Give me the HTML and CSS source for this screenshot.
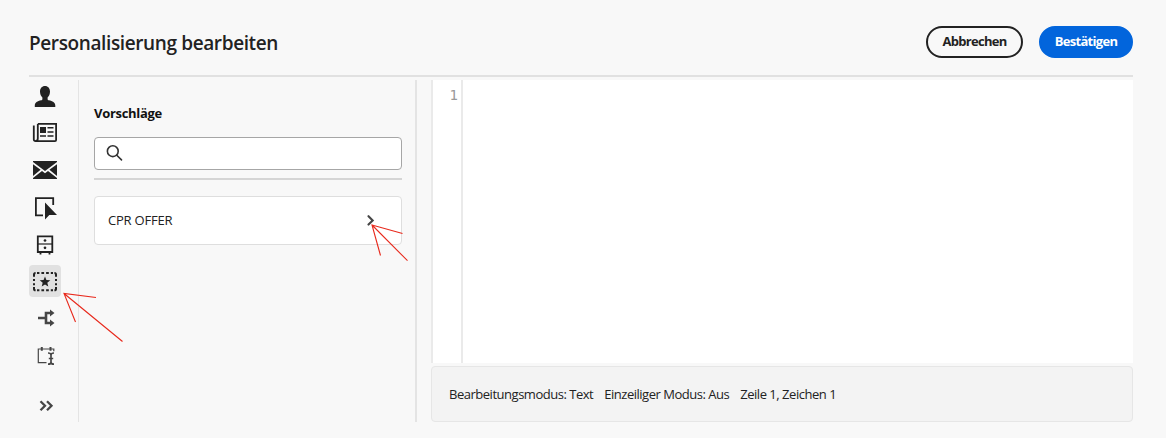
FILE: index.html
```html
<!DOCTYPE html>
<html lang="de">
<head>
<meta charset="utf-8">
<title>Personalisierung bearbeiten</title>
<link rel="stylesheet" href="styles.css">
</head>
<body>
<div class="dialog">
  <header class="header">
    <h1 class="title"><span>Personalisierung bearbeiten</span></h1>
    <div class="actions">
      <button class="btn btn-cancel"><span>Abbrechen</span></button>
      <button class="btn btn-confirm"><span>Bestätigen</span></button>
    </div>
  </header>
  <main class="body">
    <nav class="rail">
      <a class="rail-item"><svg viewBox="0 0 32 32"><path d="M16 6c3.100 0 5 2.300 5 5.600 0 2.500-.9 4.600-2.400 6v1.300c0 .8.5 1.200 1.300 1.400 3.600.9 6.400 2.200 6.400 5.200V27H5.800v-1.500c0-3 2.700-4.300 6.300-5.200.8-.2 1.300-.6 1.300-1.400v-1.300c-1.500-1.400-2.400-3.500-2.400-6C11 8.300 12.900 6 16 6z"/></svg></a>
      <a class="rail-item"><svg viewBox="0 0 32 32"><path class="line" d="M8.800 6.900h18.300v16.100q0 1.100-1.100 1.100H6.500q-1.700 0-1.700-1.600V8.600M8.800 6.900v14.600q0 2.500-2.300 2.500" stroke-width="1.800"/><path d="M11 10h6v6h-6zM18.500 10h6v1.600h-6zM18.500 14.200h6v1.600h-6zM11 18.200h6v1.600h-6zM18.500 18.200h6v1.600h-6z"/></svg></a>
      <a class="rail-item"><svg viewBox="0 0 32 32"><path d="M4 7h24v1.100L16 17.100 4 8.100zM4 10.200l7.600 5.600L4 21.900zM28 10.200l-7.600 5.600 7.600 6.100zM13 17l3 2.200L19 17l9 7.100V25H4v-.9z"/></svg></a>
      <a class="rail-item"><svg viewBox="0 0 32 32"><path class="line" d="M14 24.300H6.900V7.100h17.300v7" stroke-width="1.800"/><path d="M16 11.500v17l4.300-4.400H28z"/></svg></a>
      <a class="rail-item"><svg viewBox="0 0 32 32"><path class="line" d="M8.800 8.300h14.500v15.700H8.800zM11.500 24v2.500M20.500 24v2.500" stroke-width="1.800"/><path class="line" d="M9 16h14" stroke-width="1.200"/><circle cx="16" cy="12.500" r="1.350"/><circle cx="16" cy="19.800" r="1.350"/></svg></a>
      <a class="rail-item selected"><svg viewBox="0 0 32 32"><path class="line" d="M8 7.900h2.400m2 0h2.700m2 0h2.700m2 0H24M8 25.300h2.400m2 0h2.700m2 0h2.700m2 0H24M5 14v2m0 2.300v2m22-6.300v2m0 2.300v2M5 11.800V9.500q0-1.600 1.600-1.600M25.400 7.900Q27 7.900 27 9.500v2.300M5 22.100v1.600q0 1.600 1.600 1.600M25.400 25.300q1.600 0 1.600-1.600v-1.600" stroke-width="2"/><path d="m16 11.500 1.400 3.600 3.900.2-3 2.400 1 3.800-3.300-2.100-3.300 2.100 1-3.800-3-2.400 3.900-.2z"/></svg></a>
      <a class="rail-item muted"><svg viewBox="0 0 32 32"><path class="line" d="M9 16h7M22.500 11H17v10h5.500" stroke-width="2.600"/><path d="M21 7.500 25.500 11 21 14.500zM21 17.500l4.500 3.500-4.500 3.500z"/></svg></a>
      <a class="rail-item muted"><svg viewBox="0 0 32 32"><path class="line" d="M17.500 23.700H9.300V10h15.500v2.200" stroke-width="1.200"/><path class="line" d="M12.800 8v3.700M21.500 8v3.700" stroke-width="2"/><path class="line" d="M19 14q3 0 3 2v7.200q0 2-3 2M25 14q-3 0-3 2v7.200q0 2 3 2M19.800 19.500h4.400" stroke-width="1.700"/></svg></a>
      <a class="rail-item expand muted"><svg viewBox="0 0 32 32"><path class="line" d="m11.500 11.300 4.500 4.500-4.500 4.500M18 11.300l4.500 4.500-4.500 4.500" stroke-width="2.300"/></svg></a>
    </nav>
    <section class="panel">
      <h2 class="panel-title"><span>Vorschläge</span></h2>
      <div class="search"><svg viewBox="0 0 18 18"><circle cx="6.800" cy="7.200" r="5.400"/><path d="m10.800 11.200 4.700 4.700"/></svg></div>
      <div class="divider"></div>
      <div class="offer"><span>CPR OFFER</span><svg viewBox="0 0 10 12"><path d="m2.500 2.200 4.200 4.200-4.200 4.200"/></svg></div>
    </section>
    <section class="workspace">
      <div class="editor"><div class="gutter">1</div><div class="code"></div></div>
      <footer class="status"><span class="mode">Bearbeitungsmodus: Text</span><span class="single">Einzeiliger Modus: Aus</span><span class="cursor">Zeile 1, Zeichen 1</span></footer>
    </section>
  </main>
  <svg class="arrows" viewBox="0 0 1166 438"><path d="M96 297.500 64 293.500 75.500 322M64 293.500l58.500 48"/><path d="M402.500 233.500 372 225l8.500 30.500M372 225l35.500 35.700"/></svg>
</div>
</body>
</html>
```
FILE: styles.css
```css
* { box-sizing: border-box; }
body { margin: 0; background: #f8f8f8; color: #222; font: 13px "Open Sans", "Noto Sans", sans-serif; }
.dialog { position: relative; height: 438px; padding: 0 33px 0 29px; overflow: hidden; }
.header { height: 77px; padding-top: 8px; display: flex; align-items: center; justify-content: space-between; border-bottom: 2px solid #e1e1e1; }
.title { margin: 0; font-size: 19px; line-height: 28px; font-weight: 600; letter-spacing: -.38px; padding-top: 2px; }
.actions { display: flex; gap: 16px; }
.btn { height: 32px; padding: 0 0 1px; border-radius: 16px; border: 2px solid #222; background: transparent; color: #222; font: bold 13px "Open Sans", sans-serif; letter-spacing: -.7px; white-space: nowrap; }
.btn-cancel { width: 97px; }
.btn-confirm { width: 94px; border-color: #0265dc; background: #0265dc; color: #fff; }
.body { display: flex; height: 345px; padding-top: 3px; }
.rail { width: 50px; border-right: 1px solid #e4e4e4; display: flex; flex-direction: column; gap: 5px; }
.rail-item { width: 32px; height: 32px; border-radius: 4px; color: #222; }
.rail-item svg { display: block; width: 32px; height: 32px; fill: currentColor; }
.rail-item .line { fill: none; stroke: currentColor; }
.selected { background: #e1e1e1; }
.muted { color: #464646; }
.expand { margin-top: 14px; }
.panel { width: 338px; padding: 25px 13px 0 15px; border-right: 2px solid #e4e4e4; }
.panel-title { margin: 0; height: 32px; line-height: 17px; font-size: 13px; font-weight: 700; color: #111; letter-spacing: -.3px; }
.search { height: 33px; border: 1px solid #a6a6a6; border-radius: 4px; background: #fff; padding: 6px 11px; }
.search svg { display: block; width: 18px; height: 18px; fill: none; stroke: #333; stroke-width: 1.6; stroke-linecap: round; }
.divider { height: 2px; background: #d5d5d5; margin: 8px 0 16px; }
.offer { height: 49px; border: 1px solid #dedede; border-radius: 4px; background: #fff; display: flex; align-items: center; justify-content: space-between; padding: 0 25px 2px 13px; letter-spacing: -.2px; }
.offer svg { width: 10px; height: 12px; fill: none; stroke: #464646; stroke-width: 2.1; stroke-linecap: round; }
.workspace { flex: 1; padding-left: 14px; display: flex; flex-direction: column; gap: 3px; }
.editor { height: 283px; display: flex; background: #fff; border-left: 2px solid #eaeaea; }
.gutter { width: 30px; border-right: 2px solid #eaeaea; padding: 6px 3px 0 0; text-align: right; color: #999; font: 14px/18px "DejaVu Sans Mono", monospace; }
.code { flex: 1; }
.status { height: 56px; border: 1px solid #e6e6e6; border-radius: 4px; background: #f3f3f3; display: flex; align-items: center; gap: 11px; padding-left: 17px; letter-spacing: -.48px; white-space: nowrap; }
.arrows { position: absolute; left: 0; top: 0; width: 1166px; height: 438px; pointer-events: none; fill: none; stroke: #e8291c; stroke-width: 1.1; }
```
